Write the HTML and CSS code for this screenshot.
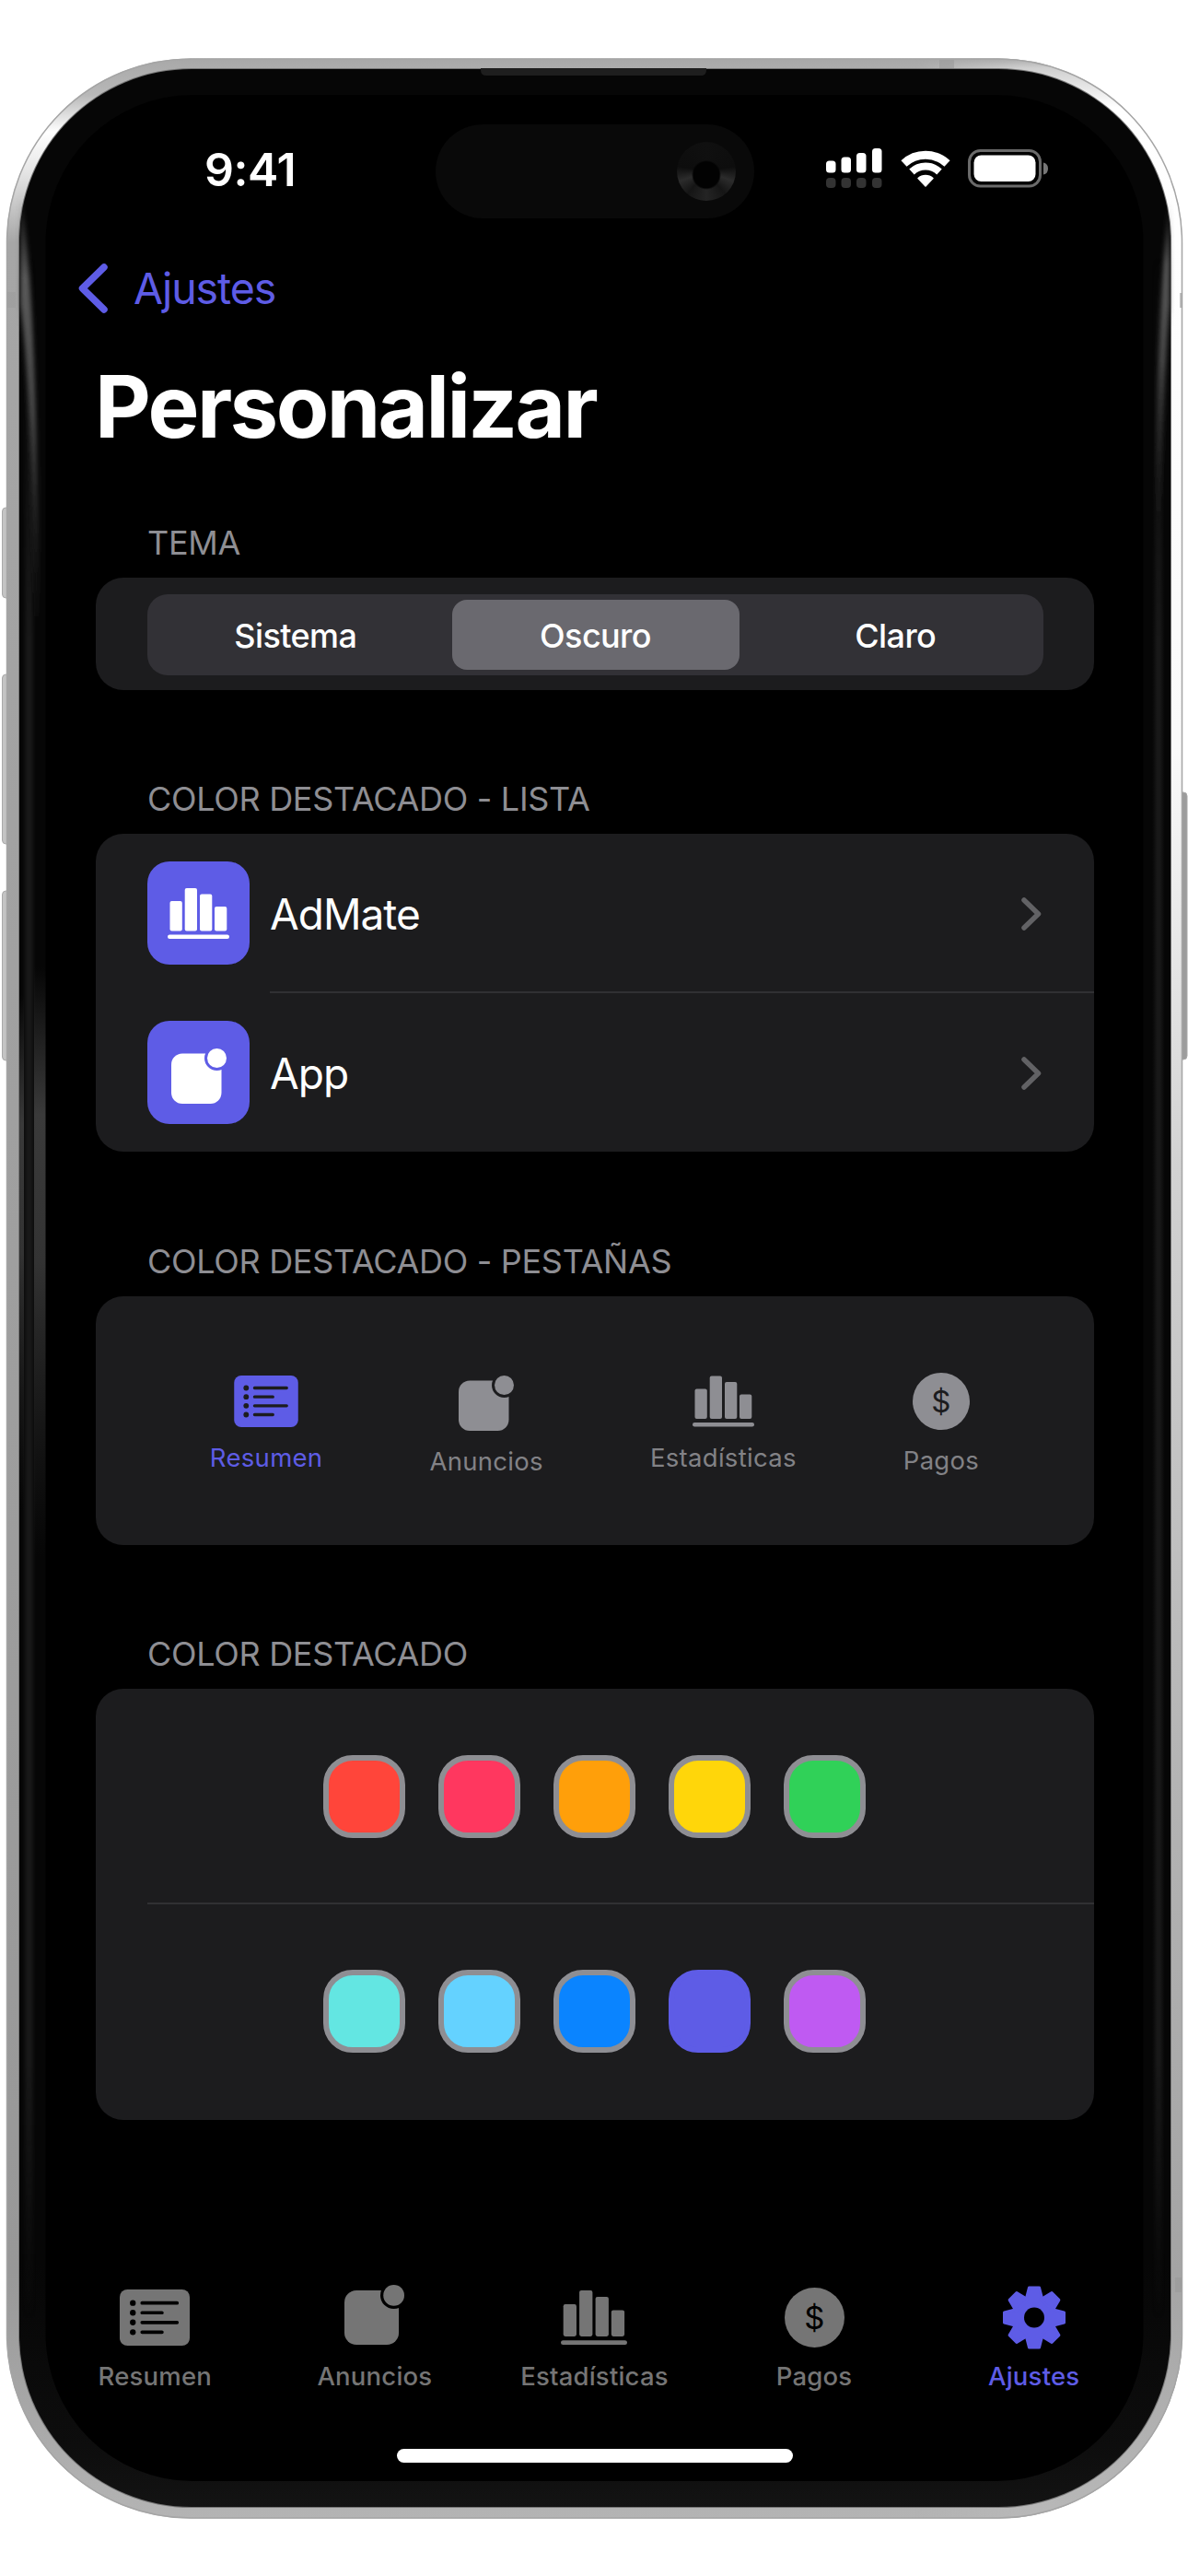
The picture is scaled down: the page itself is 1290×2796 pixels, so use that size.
FILE: index.html
```
<!DOCTYPE html>
<html lang="es">
<head>
    <meta charset="UTF-8">
    <meta name="viewport" content="width=device-width, initial-scale=1.0">
    <title>Personalizar</title>
    <link rel="stylesheet" href="styles.css">
</head>
<body>
    <!-- Iconos -->
    <svg class="sprite">
        <symbol id="i-list" viewBox="0 0 72 58">
            <rect width="72" height="58" rx="8" fill="currentColor"/>
            <g class="cut-line">
                <path d="M23 14H59M23 24H43.500M23 34H59M23 44H43.500"/>
            </g>
            <g class="cut-fill">
                <circle cx="13.500" cy="14" r="3"/>
                <circle cx="13.500" cy="24" r="3"/>
                <circle cx="13.500" cy="34" r="3"/>
                <circle cx="13.500" cy="44" r="3"/>
            </g>
        </symbol>
        <symbol id="i-app" viewBox="0 0 60 60">
            <rect x="0" y="5.500" width="54.500" height="54.500" rx="12" fill="currentColor"/>
            <circle class="cut-fill" cx="49.500" cy="10.500" r="13.500"/>
            <circle cx="49.500" cy="10.500" r="10.500" fill="currentColor"/>
        </symbol>
        <symbol id="i-chart" viewBox="0 0 67 55">
            <g fill="currentColor">
                <rect x="2.500" y="14" width="13.300" height="32.500" rx="2"/>
                <rect x="18.700" y="0" width="13.300" height="46.500" rx="2"/>
                <rect x="35" y="6.500" width="13.300" height="40" rx="2"/>
                <rect x="51" y="20" width="13.300" height="26.500" rx="2"/>
                <rect x="0" y="50.500" width="67" height="4.500" rx="2.200"/>
            </g>
        </symbol>
        <symbol id="i-coin" viewBox="0 0 62 62">
            <circle cx="31" cy="31" r="31" fill="currentColor"/>
            <text class="cut-fill coin-text" x="31" y="42.500" text-anchor="middle">$</text>
        </symbol>
        <symbol id="i-gear" viewBox="-35 -35 70 70">
            <defs>
                <path id="tooth" d="M-9 -19L-5.500 -32.500H5.500L9 -19Z"/>
            </defs>
            <g fill="currentColor" stroke="currentColor" stroke-width="3" stroke-linejoin="round">
                <circle r="20.500"/>
                <use href="#tooth"/>
                <use href="#tooth" transform="rotate(45)"/>
                <use href="#tooth" transform="rotate(90)"/>
                <use href="#tooth" transform="rotate(135)"/>
                <use href="#tooth" transform="rotate(180)"/>
                <use href="#tooth" transform="rotate(225)"/>
                <use href="#tooth" transform="rotate(270)"/>
                <use href="#tooth" transform="rotate(315)"/>
            </g>
            <circle class="cut-fill" r="11"/>
        </symbol>
        <symbol id="i-chevron" viewBox="0 0 22 36">
            <path d="M3 3L18.500 18L3 33" fill="none" stroke="currentColor" stroke-width="5.500" stroke-linecap="round" stroke-linejoin="round"/>
        </symbol>
    </svg>

    <div class="phone">
        <!-- Carcasa del teléfono -->
        <svg class="chassis" viewBox="0 0 1290 2796">
            <defs>
                <linearGradient id="metalLeft" x1="0" y1="63" x2="0" y2="2734" gradientUnits="userSpaceOnUse">
                    <stop offset="0" stop-color="#a8a8a8"/>
                    <stop offset=".015" stop-color="#b8b8b8"/>
                    <stop offset=".03" stop-color="#fff"/>
                    <stop offset=".045" stop-color="#e8e8e8"/>
                    <stop offset=".075" stop-color="#a6a6a6"/>
                    <stop offset=".9" stop-color="#989898"/>
                    <stop offset="1" stop-color="#b4b4b4"/>
                </linearGradient>
                <linearGradient id="metalRight" x1="0" y1="63" x2="0" y2="2734" gradientUnits="userSpaceOnUse">
                    <stop offset="0" stop-color="#a8a8a8"/>
                    <stop offset=".004" stop-color="#cfcfcf"/>
                    <stop offset=".02" stop-color="#fff"/>
                    <stop offset=".28" stop-color="#fafafa"/>
                    <stop offset=".45" stop-color="#d2d2d2"/>
                    <stop offset=".7" stop-color="#b4b4b4"/>
                    <stop offset=".9" stop-color="#a4a4a4"/>
                    <stop offset="1" stop-color="#b8b8b8"/>
                </linearGradient>
                <linearGradient id="fadeX" x1="0" y1="0" x2="1" y2="0">
                    <stop offset=".77" stop-color="#000"/>
                    <stop offset=".86" stop-color="#fff"/>
                </linearGradient>
                <linearGradient id="fadeY" x1="0" y1="0" x2="0" y2="1">
                    <stop offset=".1" stop-color="#000"/>
                    <stop offset=".25" stop-color="#fff"/>
                    <stop offset=".8" stop-color="#fff"/>
                    <stop offset=".9" stop-color="#000"/>
                </linearGradient>
                <mask id="rightHalf" maskUnits="userSpaceOnUse" x="0" y="0" width="1290" height="2796">
                    <rect width="1290" height="2796" fill="url(#fadeX)"/>
                </mask>
                <mask id="middle" maskUnits="userSpaceOnUse" x="0" y="0" width="1290" height="2796">
                    <rect width="1290" height="2796" fill="url(#fadeY)"/>
                </mask>
                <linearGradient id="bezel" x1="0" y1="75" x2="0" y2="2721" gradientUnits="userSpaceOnUse">
                    <stop offset="0" stop-color="#060606"/>
                    <stop offset=".9" stop-color="#060606"/>
                    <stop offset=".975" stop-color="#0d0d0d"/>
                    <stop offset="1" stop-color="#131313"/>
                </linearGradient>
                <linearGradient id="stripe" x1="0" y1="0" x2="1" y2="0">
                    <stop offset="0" stop-color="#181818" stop-opacity="0"/>
                    <stop offset=".4" stop-color="#181818"/>
                    <stop offset=".6" stop-color="#181818"/>
                    <stop offset="1" stop-color="#181818" stop-opacity="0"/>
                </linearGradient>
                <linearGradient id="glow" x1="0" y1="0" x2="0" y2="1">
                    <stop offset="0" stop-color="#5a5a5a" stop-opacity="0"/>
                    <stop offset=".2" stop-color="#5a5a5a"/>
                    <stop offset=".5" stop-color="#484848"/>
                    <stop offset="1" stop-color="#2a2a2a" stop-opacity="0"/>
                </linearGradient>
                <linearGradient id="band" x1="0" y1="0" x2="0" y2="1">
                    <stop offset="0" stop-color="#3a3a3a" stop-opacity="0"/>
                    <stop offset=".25" stop-color="#3a3a3a"/>
                    <stop offset=".5" stop-color="#333"/>
                    <stop offset="1" stop-color="#222" stop-opacity="0"/>
                </linearGradient>
                <filter id="soft" x="-100%" y="-10%" width="300%" height="120%">
                    <feGaussianBlur stdDeviation="2.500"/>
                </filter>
            </defs>
            <g fill="#c4c4c4" stroke="#a9a9a9">
                <rect x="2.500" y="551" width="12" height="98" rx="4"/>
                <rect x="2.500" y="732" width="12" height="184" rx="4"/>
                <rect x="2.500" y="967" width="12" height="184" rx="4"/>
                <rect x="1276" y="860" width="13" height="290" rx="4" fill="#9c9c9c"/>
            </g>
            <rect x="7" y="63.500" width="1277" height="2670" rx="200" fill="url(#metalLeft)"/>
            <rect x="7" y="63.500" width="1277" height="2670" rx="200" fill="url(#metalRight)" mask="url(#rightHalf)"/>
            <rect x="7.500" y="64" width="1276" height="2669" rx="199.500" fill="none" stroke="#a5a5a5" stroke-width="1.500"/>
            <rect x="20" y="74" width="1252" height="2648" rx="188" fill="#777"/>
            <rect x="21" y="75" width="1250" height="2646" rx="187" fill="url(#bezel)"/>
            <g mask="url(#middle)">
                <rect x="24" y="260" width="15" height="2300" fill="url(#stripe)"/>
                <rect x="1251" y="260" width="14" height="2300" fill="url(#stripe)"/>
            </g>
            <g filter="url(#soft)">
                <path d="M22 205C36 300 41 450 43 690L37 690C36 500 31 400 22 330Z" fill="url(#glow)"/>
                <path d="M1270 215C1260 300 1256 420 1255 570L1261 570C1262 470 1266 380 1270 330Z" fill="url(#glow)"/>
            </g>
            <rect x="37" y="1050" width="13" height="640" fill="url(#band)"/>
            <rect x="21" y="1080" width="5" height="560" fill="url(#band)"/>
            <path d="M522 74H767V76Q767 82 761 82H528Q522 82 522 76Z" fill="#1e1e1e"/>
            <g fill="#9a9a9a">
                <rect x="8" y="317" width="9" height="17" opacity=".5"/>
                <rect x="1281" y="318" width="3" height="16" opacity=".6"/>
                <rect x="1276" y="2472" width="7" height="16" opacity=".6"/>
                <rect x="1020" y="65" width="16" height="9" opacity=".6"/>
            </g>
            <rect x="49.500" y="103" width="1192" height="2590" rx="160" fill="#000"/>
        </svg>

        <div class="screen">
            <header class="status-bar">
                <span class="time">9:41</span>
                <div class="island">
                    <span class="camera"></span>
                </div>
                <div class="status-icons">
                    <svg width="62" height="43" viewBox="0 0 62 43">
                        <g fill="#fff">
                            <rect x="0" y="13.500" width="10.500" height="13" rx="3.500"/>
                            <rect x="16.500" y="9.500" width="10.500" height="17" rx="3.500"/>
                            <rect x="33" y="5" width="10.500" height="21.500" rx="3.500"/>
                            <rect x="50" y="0" width="10.500" height="26.500" rx="3.500"/>
                        </g>
                        <g fill="#333">
                            <rect x="0" y="32" width="10.500" height="11" rx="4"/>
                            <rect x="16.500" y="32" width="10.500" height="11" rx="4"/>
                            <rect x="33" y="32" width="10.500" height="11" rx="4"/>
                            <rect x="50" y="32" width="10.500" height="11" rx="4"/>
                        </g>
                    </svg>
                    <svg width="56" height="42" viewBox="-28 -41 56 42">
                        <g fill="none" stroke="#fff">
                            <path d="M-23.500 -25.500A34.500 34.500 0 0 1 23.500 -25.500" stroke-width="9"/>
                            <path d="M-15 -16.500A22 22 0 0 1 15 -16.500" stroke-width="8"/>
                        </g>
                        <path d="M0 -1L-8 -9.500A12 12 0 0 1 8 -9.500Z" fill="#fff" stroke="#fff" stroke-width="1.500" stroke-linejoin="round"/>
                    </svg>
                    <svg width="88" height="42" viewBox="0 0 88 42">
                        <rect x="1.500" y="1.500" width="77" height="38.500" rx="12" fill="none" stroke="#6a6a6a" stroke-width="3"/>
                        <rect x="6.500" y="6.500" width="67" height="28.500" rx="8" fill="#fff"/>
                        <path d="M82 14.500Q87 15.500 87 21Q87 26.500 82 27.500Z" fill="#777"/>
                    </svg>
                </div>
            </header>

            <a href="#" class="nav-back">
                <svg width="32" height="54" viewBox="0 0 32 54">
                    <path d="M28 4L4.500 27L28 50" fill="none" stroke="currentColor" stroke-width="7.500" stroke-linecap="round" stroke-linejoin="round"/>
                </svg>
                <span>Ajustes</span>
            </a>

            <h1>Personalizar</h1>

            <section class="group">
                <h2>TEMA</h2>
                <div class="card theme-card">
                    <div class="segmented">
                        <button class="segment">Sistema</button>
                        <button class="segment selected">Oscuro</button>
                        <button class="segment">Claro</button>
                    </div>
                </div>
            </section>

            <section class="group">
                <h2>COLOR DESTACADO - LISTA</h2>
                <div class="card">
                    <a href="#" class="row">
                        <span class="tile"><svg width="67" height="55"><use href="#i-chart"/></svg></span>
                        <span class="row-body">AdMate <svg class="chevron" width="22" height="36"><use href="#i-chevron"/></svg></span>
                    </a>
                    <a href="#" class="row">
                        <span class="tile tile-app"><svg width="60" height="60"><use href="#i-app"/></svg></span>
                        <span class="row-body">App <svg class="chevron" width="22" height="36"><use href="#i-chevron"/></svg></span>
                    </a>
                </div>
            </section>

            <section class="group">
                <h2>COLOR DESTACADO - PESTAÑAS</h2>
                <div class="card tabs-preview">
                    <div class="preview active">
                        <svg width="70" height="56"><use href="#i-list"/></svg>
                        <span>Resumen</span>
                    </div>
                    <div class="preview">
                        <svg width="60" height="60"><use href="#i-app"/></svg>
                        <span>Anuncios</span>
                    </div>
                    <div class="preview">
                        <svg width="67" height="56"><use href="#i-chart"/></svg>
                        <span>Estadísticas</span>
                    </div>
                    <div class="preview preview-coin">
                        <svg width="62" height="62"><use href="#i-coin"/></svg>
                        <span>Pagos</span>
                    </div>
                </div>
            </section>

            <section class="group">
                <h2>COLOR DESTACADO</h2>
                <div class="card palette">
                    <div class="swatches">
                        <span class="swatch red"></span>
                        <span class="swatch pink"></span>
                        <span class="swatch orange"></span>
                        <span class="swatch yellow"></span>
                        <span class="swatch green"></span>
                    </div>
                    <div class="swatches">
                        <span class="swatch mint"></span>
                        <span class="swatch cyan"></span>
                        <span class="swatch blue"></span>
                        <span class="swatch indigo"></span>
                        <span class="swatch purple"></span>
                    </div>
                </div>
            </section>

            <nav class="tab-bar">
                <a href="#" class="tab">
                    <svg width="76" height="60"><use href="#i-list"/></svg>
                    <span>Resumen</span>
                </a>
                <a href="#" class="tab tab-app">
                    <svg width="65" height="65"><use href="#i-app"/></svg>
                    <span>Anuncios</span>
                </a>
                <a href="#" class="tab">
                    <svg width="72" height="60"><use href="#i-chart"/></svg>
                    <span>Estadísticas</span>
                </a>
                <a href="#" class="tab">
                    <svg width="65" height="65"><use href="#i-coin"/></svg>
                    <span>Pagos</span>
                </a>
                <a href="#" class="tab active">
                    <svg width="70" height="70"><use href="#i-gear"/></svg>
                    <span>Ajustes</span>
                </a>
            </nav>
            <div class="home-indicator"></div>
        </div>
    </div>
</body>
</html>
```
FILE: styles.css
```
* {
    margin: 0;
    padding: 0;
    box-sizing: border-box;
    font-family: Inter, 'Liberation Sans', sans-serif;
}

:root {
    --accent: #5e5ce6;
    --card: #1c1c1e;
    --gray: #8e8e93;
    --cut: #000;
}

body {
    background: #fff;
}

a {
    color: inherit;
    text-decoration: none;
}

.sprite {
    display: none;
}

.cut-fill {
    fill: var(--cut);
}

.cut-line {
    fill: none;
    stroke: var(--cut);
    stroke-width: 3.5;
    stroke-linecap: round;
}

.coin-text {
    font-size: 33px;
    font-weight: 400;
}

.phone {
    position: relative;
    width: 1290px;
    height: 2796px;
    padding: 103px 48px 0 49px;
    overflow: hidden;
}

.chassis {
    position: absolute;
    left: 0;
    top: 0;
    width: 1290px;
    height: 2796px;
}

.screen {
    position: relative;
    display: flex;
    flex-direction: column;
    height: 2590px;
    color: #fff;
}

/* Barra de estado */
.status-bar {
    position: relative;
    display: flex;
    justify-content: space-between;
    align-items: center;
    height: 162px;
    padding: 0 103px 0 173px;
}

.time {
    font-size: 50px;
    font-weight: 600;
    letter-spacing: -0.4px;
}

.island {
    position: absolute;
    left: 424px;
    top: 32px;
    display: flex;
    align-items: center;
    justify-content: flex-end;
    width: 346px;
    height: 102px;
    padding-right: 20px;
    border-radius: 51px;
    background: #090909;
}

.camera {
    width: 64px;
    height: 64px;
    border-radius: 50%;
    background:
        radial-gradient(circle at 50% 56%, #020202 0 14px, transparent 16px),
        conic-gradient(#101010 0deg, #0d0d0d 80deg, #2c2c2c 110deg, #151515 140deg, #242424 180deg, #151515 220deg, #2c2c2c 250deg, #0d0d0d 280deg, #101010 360deg);
}

.status-icons {
    display: flex;
    align-items: center;
    gap: 18px;
    margin-top: -3px;
}

/* Navegación */
.nav-back {
    display: flex;
    align-items: center;
    gap: 28px;
    height: 95px;
    padding-left: 36px;
    color: var(--accent);
    font-size: 46.5px;
    letter-spacing: -1.1px;
}

h1 {
    height: 160px;
    margin-bottom: 29.5px;
    padding-left: 54px;
    font-size: 94px;
    font-weight: 700;
    letter-spacing: -2.6px;
    line-height: 162px;
}

/* Grupos */
.group {
    margin: 0 54px 79.5px 55px;
}

h2 {
    height: 77px;
    padding-left: 56px;
    color: var(--gray);
    font-size: 36px;
    font-weight: 400;
    letter-spacing: -0.3px;
    line-height: 78px;
    white-space: nowrap;
}

.card {
    --cut: var(--card);
    border-radius: 30px;
    background: var(--card);
    overflow: hidden;
}

.theme-card {
    height: 122px;
    padding: 18px 55px 16px 56px;
}

.segmented {
    display: grid;
    grid-template-columns: 1fr 312px 1fr;
    gap: 9px;
    height: 88.5px;
    padding: 6px 0;
    border-radius: 22px;
    background: #323136;
}

.segment {
    padding-top: 1.5px;
    border: none;
    border-radius: 16px;
    background: none;
    color: #fff;
    font-size: 36px;
    font-weight: 500;
    letter-spacing: -0.6px;
}

.segment.selected {
    background: #6a696f;
}

.row {
    display: flex;
    align-items: center;
    gap: 22px;
    height: 172.5px;
    padding-left: 56px;
    font-size: 46px;
    letter-spacing: -1px;
}

.tile {
    --cut: var(--accent);
    display: flex;
    align-items: center;
    justify-content: center;
    width: 111px;
    height: 112px;
    border-radius: 24px;
    background: var(--accent);
}

.tile-app {
    padding: 9px 0 0 0;
}

.row-body {
    display: flex;
    flex: 1;
    align-items: center;
    justify-content: space-between;
    height: 100%;
    padding: 3px 57px 0 0;
}

.row:first-child .row-body {
    border-bottom: 2px solid #303033;
}

.chevron {
    color: #626265;
}

/* Vista previa de pestañas */
.tabs-preview {
    display: flex;
    justify-content: center;
    gap: 116px;
    height: 270px;
    padding: 86px 1px 0 0;
}

.preview {
    display: flex;
    flex-direction: column;
    align-items: center;
    gap: 15px;
    color: var(--gray);
    font-size: 27.5px;
    letter-spacing: 0.3px;
    line-height: 36px;
}

.preview span {
    color: #828286;
}

.preview-coin {
    margin-top: -3px;
}

.preview.active,
.preview.active span {
    color: var(--accent);
}

/* Paleta */
.palette {
    height: 467.5px;
}

.swatches {
    display: flex;
    align-items: center;
    justify-content: center;
    gap: 36px;
    height: 233.5px;
    margin-left: 56px;
    padding-right: 57px;
}

.swatches:first-child {
    padding-top: 3px;
    border-bottom: 2px solid #303033;
}

.swatch {
    width: 89px;
    height: 90px;
    border: 6px solid var(--gray);
    border-radius: 32px;
}

.red { background: #ff453a; }
.pink { background: #ff375f; }
.orange { background: #ff9f0a; }
.yellow { background: #ffd60a; }
.green { background: #30d158; }
.mint { background: #63e6e2; }
.cyan { background: #64d2ff; }
.blue { background: #0a84ff; }
.indigo { background: #5e5ce6; border-color: #5e5ce6; }
.purple { background: #bf5af2; }

/* Barra inferior */
.tab-bar {
    display: flex;
    margin-top: 89.5px;
}

.tab {
    display: flex;
    flex: 1;
    flex-direction: column;
    align-items: center;
    color: #757575;
    font-size: 27.5px;
    font-weight: 500;
    letter-spacing: 0.2px;
    line-height: 36px;
}

.tab svg {
    height: 91px;
}

.tab-app svg {
    margin-top: -3px;
    margin-bottom: 3px;
}

.tab.active {
    color: var(--accent);
}

.home-indicator {
    width: 430px;
    height: 15px;
    margin: 61px auto 0;
    border-radius: 8px;
    background: #fff;
}
```
